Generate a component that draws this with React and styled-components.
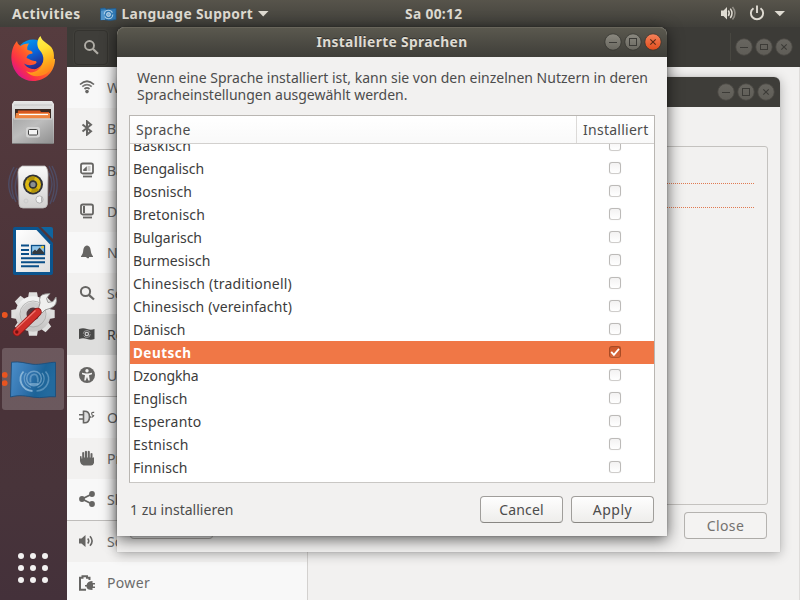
import React, { useLayoutEffect, useRef, useState } from "react";
import styled, { createGlobalStyle } from "styled-components";

const GlobalStyle = createGlobalStyle`
  *, *::before, *::after { box-sizing: border-box; }
  html, body { margin: 0; padding: 0; overflow: hidden; }
  body { font-family: "Noto Sans", "Open Sans", sans-serif; font-size: 14px; color: #3c3c3c; }
  svg { display: block; flex: none; }
`;

/* ---------- text that is tracked to fill a given width ---------- */

const TextSpan = styled.span`
  display: block;
  flex: none;
  width: ${(p) => p.$width}px;
  white-space: pre;
`;

function FitText({ width, children, className }) {
  const ref = useRef(null);
  const [spacing, setSpacing] = useState(0);
  useLayoutEffect(() => {
    const range = document.createRange();
    range.selectNodeContents(ref.current);
    const natural = range.getBoundingClientRect().width;
    setSpacing((width - natural) / String(children).length);
  }, []);
  return (
    <TextSpan ref={ref} $width={width} className={className} style={{ letterSpacing: spacing }}>
      {children}
    </TextSpan>
  );
}

/* ---------- desktop ---------- */

const Desktop = styled.div`
  position: relative;
  display: grid;
  grid-template-rows: 27px 573px;
  grid-template-columns: 67px 733px;
  width: 800px;
  height: 600px;
  overflow: hidden;
  background: #f2f1f0;
`;

const TopBar = styled.header`
  grid-column: 1 / 3;
  display: grid;
  grid-template-columns: 405px 1fr auto;
  align-items: center;
  background: linear-gradient(#57544b, #403f3a);
  color: #dfdbd2;
  font-weight: 700;
  font-size: 13.8px;
  line-height: 26px;
`;

const BarLeft = styled.div`
  display: flex;
  align-items: center;
  padding-left: 12px;
`;

const AppMenu = styled.div`
  display: flex;
  align-items: center;
  margin-left: 19px;
  gap: 5px;
`;

const BarRight = styled.div`
  display: flex;
  padding-right: 14px;
`;

const Dock = styled.nav`
  display: flex;
  flex-direction: column;
  gap: 2px;
  padding: 1px 3px 0 2px;
  background: linear-gradient(#563c3f, #4a3238 55%, #48343a 80%, #44313a);
`;

const DockItem = styled.div`
  width: 62px;
  height: 62px;
  border-radius: 3px;
  background: ${(p) => (p.$active ? "rgba(255,255,255,0.19)" : "transparent")};
`;

const AppsGrid = styled.div`
  display: grid;
  grid-template-columns: repeat(3, 6px);
  gap: 6px;
  margin: 141px 0 0 16px;
`;

const AppsDot = styled.i`
  width: 6px;
  height: 6px;
  border-radius: 50%;
  background: #f3f1f1;
`;

/* ---------- settings window ---------- */

const Settings = styled.section`
  display: grid;
  grid-template-rows: 40px 533px;
  background: #f2f1f0;
  border-right: 1px solid #dedcda;
`;

const SettingsHeader = styled.div`
  display: flex;
  align-items: center;
  justify-content: space-between;
  margin-right: -1px;
  padding: 0 8px 0 7px;
  background: #3c3b37;
`;

const SearchButton = styled.div`
  display: grid;
  place-items: center;
  width: 34px;
  height: 35px;
  border: 1px solid #34332f;
  border-radius: 4px;
  background: #3f3e3a;
  box-shadow: 0 0 0 1px #41403b;
`;

const HeaderControls = styled.div`
  display: flex;
  align-items: center;
  gap: 4px;
`;

const HeaderRule = styled.i`
  width: 1px;
  height: 28px;
  margin-right: 1px;
  background: #484741;
`;

const Sidebar = styled.div`
  width: 241px;
  height: 533px;
  overflow: hidden;
  border-right: 1px solid #d3d1cf;
  background: #f7f7f7;
`;

const Group = styled.div`
  border-bottom: 1px solid #bfbdbb;
`;

const SideRow = styled.div`
  display: flex;
  align-items: center;
  gap: 12px;
  height: 41px;
  padding-left: 12px;
  color: #6b6b6b;
  background: ${(p) => (p.$selected ? "#dededd" : p.$shade ? "#f2f1f0" : "#f8f8f8")};
  ${(p) => p.$selected && "color: #4a4a4a;"}

  svg { margin-top: -1px; }
`;

/* ---------- floating windows ---------- */

const Window = styled.section`
  position: absolute;
  left: 117px;
  display: flex;
  flex-direction: column;
  background: #f2f1f0;
  border-radius: 8px 8px 0 0;
`;

const BackWindow = styled(Window)`
  top: 77px;
  width: 663px;
  height: 475px;
  border-radius: 6px 6px 0 0;
  box-shadow: 0 2px 12px rgba(0, 0, 0, 0.3), 0 0 1px rgba(0, 0, 0, 0.3);
`;

const Dialog = styled(Window)`
  top: 27px;
  width: 550px;
  height: 509px;
  box-shadow: 0 3px 16px rgba(0, 0, 0, 0.65), 0 0 2px rgba(0, 0, 0, 0.3);
`;

const TitleBar = styled.div`
  display: grid;
  grid-template-columns: 1fr auto 1fr;
  align-items: center;
  height: 30px;
  flex: none;
  padding: 0 5px;
  border-radius: inherit;
  border-bottom-left-radius: 0;
  border-bottom-right-radius: 0;
  background: ${(p) => (p.$dim ? "#3e3d39" : "linear-gradient(#5b594f, #3f3e39)")};
  ${(p) => !p.$dim && "box-shadow: inset 0 1px 0 #69665b;"}
  color: #dfdbd2;
  font-weight: 700;
  font-size: 13.8px;
  text-shadow: 0 -1px 0 #32312e;
`;

const Title = styled.div`
  grid-column: 2;
  padding-bottom: 2px;
`;

const TitleControls = styled.div`
  grid-column: 3;
  justify-self: end;
  display: flex;
  gap: 2px;
`;

const BackBody = styled.div`
  flex: 1;
  display: flex;
  flex-direction: column;
  padding: 39px 12px 12px 13px;
`;

const TabFrame = styled.div`
  height: 359px;
  flex: none;
  border: 1px solid #c4c2bf;
  border-radius: 3px;
  padding: 36px 12px 0 13px;
`;

const DottedRule = styled.i`
  display: block;
  height: 1px;
  margin-bottom: 23px;
  background: repeating-linear-gradient(90deg, #f2f1f0 0 1px, #e07a52 1px 2px);
`;

const ButtonRow = styled.div`
  display: flex;
  justify-content: space-between;
  margin: 7px 1px 0 0;
`;

const Button = styled.div`
  display: grid;
  place-items: center;
  width: 83px;
  height: 27px;
  border: 1px solid ${(p) => (p.$dim ? "#b5b3b0" : "#a09e9b")};
  border-bottom-color: ${(p) => (p.$dim ? "#adaba8" : "#888683")};
  border-radius: 4px;
  background: ${(p) => (p.$dim ? "#f4f3f2" : "linear-gradient(#fefefe, #eeedeb)")};
  color: ${(p) => (p.$dim ? "#73716f" : "#4c4c4c")};
`;

const DialogBody = styled.div`
  display: flex;
  flex-direction: column;
  padding: 12px 12px 12px;
`;

const Intro = styled.div`
  padding: 0 0 0 8px;
  margin-bottom: 12px;
  height: 34px;
  line-height: 17px;
  color: #4c4c4c;
`;

const Table = styled.div`
  width: 526px;
  height: 368px;
  overflow: hidden;
  border: 1px solid #b9b6b2;
  border-bottom-color: #c9c7c4;
  background: #fff;
`;

const TableHead = styled.div`
  position: relative;
  z-index: 1;
  display: grid;
  grid-template-columns: 446px 1fr;
  height: 28px;
  border-bottom: 1px solid #d2d0ce;
  background: linear-gradient(#fff, #f9f9f9);
  color: #4c4c4c;
  line-height: 27px;
`;

const HeadCell = styled.div`
  padding-left: 6px;
  ${(p) => p.$ruled && "border-left: 1px solid #dcdad8;"}
`;

const Rows = styled.div`
  margin-top: -10px;
`;

const Row = styled.div`
  display: flex;
  justify-content: space-between;
  height: 23px;
  padding: 0 33px 0 3px;
  line-height: 23px;
  color: ${(p) => (p.$selected ? "#fff" : "#3c3c3c")};
  ${(p) => p.$selected && "background: #f07746; font-weight: 700; font-size: 13.5px; line-height: 25px;"}
`;

const CheckBox = styled.div`
  width: 12px;
  height: 12px;
  margin-top: 5px;
  border: 1px solid ${(p) => (p.$checked ? "#a84b25" : "#bcbab8")};
  border-bottom-color: ${(p) => (p.$checked ? "#b5552f" : "#cfcdcb")};
  border-radius: 3px;
  background: ${(p) => (p.$checked ? "linear-gradient(#cc5527, #d9693f)" : "linear-gradient(#f3f2f2, #fff)")};
  box-shadow: ${(p) => (p.$checked ? "none" : "0 0 1px rgba(0,0,0,0.15)")};
`;

const Footer = styled.div`
  display: flex;
  gap: 8px;
  margin-top: 13px;
  padding-right: 1px;
  color: #4c4c4c;
`;

const Status = styled.div`
  flex: 1;
  padding-left: 1px;
  line-height: 28px;
`;

/* ---------- icons ---------- */

function WinButton({ kind, tone = "dim", wide }) {
  const id = `wb-${tone}`;
  const fills = {
    dim: ["#686660", "#5f5d57"],
    normal: ["#8b8980", "#69675f"],
    close: ["#f6835b", "#e04c1c"],
  }[tone];
  const stroke = tone === "close" ? "#5a2a16" : "#3c3b37";
  return (
    <svg width={wide ? 16 : 18} height="18" viewBox={wide ? "1 0 16 18" : "0 0 18 18"} overflow="visible">
      <defs>
        <linearGradient id={id} x1="0" y1="0" x2="0" y2="1">
          <stop offset="0" stopColor={fills[0]} />
          <stop offset="1" stopColor={fills[1]} />
        </linearGradient>
      </defs>
      <circle cx="9" cy="9" r="8.2" fill={`url(#${id})`} stroke={tone === "dim" ? "#4c4a45" : "#34332f"} strokeWidth="0.8" />
      {kind === "min" && <path d="M5 9.5h8" stroke={stroke} />}
      {kind === "max" && <rect x="5.5" y={wide ? 6.5 : 5.5} width="7" height={wide ? 5 : 7} fill="none" stroke={stroke} />}
      {kind === "close" && <path d="M6.3 6.3l5.4 5.4M11.7 6.3l-5.4 5.4" stroke={stroke} strokeWidth="1.1" />}
    </svg>
  );
}

const G = "#666563";

const sideIcons = {
  wifi: (
    <g fill="none" stroke={G} strokeWidth="1.7">
      <path d="M1 5.5Q8 -1 15 5.5" />
      <path d="M3.3 7.7Q8 3.4 12.7 7.7" opacity=".85" />
      <path d="M5.5 10Q8 7.7 10.5 10" />
      <circle cx="8" cy="12.6" r="1.8" fill={G} stroke="none" />
    </g>
  ),
  bluetooth: <path d="M3.5 4.5L12 11.2L8 14.6V1.4L12 4.8L3.5 11.5" fill="none" stroke={G} strokeWidth="2" />,
  background: (
    <g>
      <rect x="2" y="1.5" width="12" height="10" rx="1.8" fill="none" stroke={G} strokeWidth="1.8" />
      <path d="M4.2 9V7.500L7.800 4.200V9z" fill={G} />
      <path d="M8.500 4h3v5h-3z" fill="#c9c8c7" />
      <path d="M4 14.5h9" stroke={G} strokeWidth="1.8" />
    </g>
  ),
  dock: (
    <g>
      <rect x="2" y="1.5" width="12" height="10" rx="1.8" fill="none" stroke={G} strokeWidth="1.8" />
      <path d="M4 3h2v7H4z" fill={G} />
      <path d="M4 14.5h9" stroke={G} strokeWidth="1.8" />
    </g>
  ),
  bell: <path d="M8 1.5C5 1.8 4.5 4.5 4.2 7C4 9.5 3 10.8 2 12.2V13H7.2Q8 15 10 14V13h4v-.8c-1-1.4-2-2.7-2.2-5.2C11.5 4.500 11 1.800 8 1.500z" fill={G} />,
  search: (
    <g fill="none" stroke={G}>
      <circle cx="6.500" cy="6.500" r="4.600" strokeWidth="2" />
      <path d="M9.800 9.800L15 14.500" strokeWidth="2.300" />
    </g>
  ),
  region: (
    <g>
      <path d="M0 3Q4 1.500 8 3T15.500 3V13Q12 14.500 8 13T0 13z" fill="#494948" />
      <circle cx="7.800" cy="8" r="3.500" fill="none" stroke="#aaa" strokeWidth=".8" strokeDasharray="9 2" />
      <circle cx="7.800" cy="8" r="1.700" fill="none" stroke="#ccc" strokeWidth="1.200" />
    </g>
  ),
  access: (
    <g>
      <circle cx="8" cy="8" r="8" fill={G} />
      <circle cx="8" cy="3.700" r="1.700" fill="#f2f1f0" />
      <path d="M3 5.700L6.700 6.500h2.600L13 5.700v1.600L10 8.200L10.800 13.500H9.300L8 10L6.700 13.500H5.200L6 8.200L3 7.300z" fill="#f2f1f0" />
    </g>
  ),
  online: (
    <g fill="none" stroke={G}>
      <path d="M4.500 2.300Q10.500 1.500 10.500 8T4.500 13.700z" strokeWidth="1.600" fill="#ddd" />
      <path d="M0 5.700h4M0 10h4M10.500 8h1.500" strokeWidth="1.600" />
      <path d="M15.200 3.400Q12.500 3 12.700 4.800T14.300 6.500T12.500 8.500" strokeWidth="1.200" />
    </g>
  ),
  privacy: <path d="M1 6.500Q1.500 5.500 2.600 6.500V8.500H3.200V2.500Q4.200 1.500 5.200 2.500V7.500H5.900V1.500Q7 .2 8 1.500V7.500H8.700V1.500Q9.800 .2 10.800 1.500V7.500H11.500V3.500Q12.500 2.500 13.500 3.500V8Q15 6.500 15 8V13Q14 15.500 12 15.500H4.500Q1.500 14.500 1 11z" fill={G} />,
  sharing: (
    <g fill={G}>
      <path d="M13 3L3 8l10 5" fill="none" stroke={G} strokeWidth="1.800" />
      <circle cx="3" cy="8" r="2.900" />
      <circle cx="13" cy="3" r="2.900" />
      <circle cx="13" cy="13" r="2.900" />
    </g>
  ),
  sound: (
    <g>
      <path d="M0 5.500h2.500L6.500 2v12L2.500 10.500H0z" fill={G} />
      <path d="M8.700 5.500Q10.800 8 8.700 10.500M11 3.200Q15.200 8 11 12.800" fill="none" stroke={G} strokeWidth="1.600" />
    </g>
  ),
  power: (
    <g>
      <path d="M7 14.700H1V2.700H3.500V1.300H8V2.700h2.500V5" fill="none" stroke={G} strokeWidth="2" />
      <path d="M13.500 6V8h2.500v1.500h-2v2h2V13h-2.500v2Q7.500 15 7.500 11.500H6V10H7.500Q8.500 6 13.500 6z" fill={G} />
    </g>
  ),
};

function SideIcon({ name }) {
  return (
    <svg width="16" height="16" viewBox="0 0 16 16">
      {sideIcons[name]}
    </svg>
  );
}

function FirefoxIcon() {
  return (
    <svg width="62" height="62" viewBox="2 28 62 62">
      <defs>
        <linearGradient id="ff-body" x1=".9" y1=".1" x2=".1" y2=".8">
          <stop offset="0" stopColor="#ffd23a" />
          <stop offset=".25" stopColor="#ffa01f" />
          <stop offset=".55" stopColor="#ff5a2a" />
          <stop offset=".8" stopColor="#fa2e4a" />
          <stop offset="1" stopColor="#dd1688" />
        </linearGradient>
        <linearGradient id="ff-globe" x1="0" y1="0" x2=".5" y2="1">
          <stop offset="0" stopColor="#00a8f5" />
          <stop offset=".5" stopColor="#0867dd" />
          <stop offset="1" stopColor="#2b1c78" />
        </linearGradient>
        <linearGradient id="ff-tail" x1="0" y1="0" x2=".3" y2="1">
          <stop offset="0" stopColor="#fff85a" />
          <stop offset=".45" stopColor="#ffe134" />
          <stop offset=".75" stopColor="#ffb31c" />
          <stop offset="1" stopColor="#ff8a1c" />
        </linearGradient>
      </defs>
      <circle cx="33" cy="56" r="16.500" fill="url(#ff-globe)" />
      <path d="M17 41C12.500 46 11 53 11.500 60C13 73 22 81 33 81C46 81 55 71 55 59L44 57C44 62 41 67 36 69C34 69.500 27 69 24 63.500C28 66 31 65 34 64.500C37 63.500 37.500 61 34.500 61C31 60.500 29.500 59 26.500 58C27 55 29 54 32.500 53.500C33 51.500 31 50.500 27.500 50C26.500 47 28 45 29 43.500C25 43.500 22.500 44.500 20.500 46C18 44.500 17.500 43 17 41z" fill="url(#ff-body)" />
      <path d="M40.500 36C36.500 40 36.500 46 39.500 50C45 56 45 64 38 70C34 73 29 73 26 71C32 79 45 77 50 70C54.500 63 55.500 53 51.500 47.500C48 43 42 42 40.500 36z" fill="url(#ff-tail)" />
    </svg>
  );
}

function FilesIcon() {
  return (
    <svg width="62" height="62" viewBox="2 92 62 62">
      <defs>
        <linearGradient id="fi-front" x1="0" y1="0" x2="1" y2="1">
          <stop offset="0" stopColor="#a8a8a8" />
          <stop offset=".4" stopColor="#bdbdbd" />
          <stop offset="1" stopColor="#8e8e8e" />
        </linearGradient>
        <linearGradient id="fi-top" x1="0" y1="0" x2="0" y2="1">
          <stop offset="0" stopColor="#e6e6e6" />
          <stop offset="1" stopColor="#a8a8a8" />
        </linearGradient>
      </defs>
      <path d="M14 101H52L54 104V143H12V104z" fill="url(#fi-top)" />
      <path d="M14 105H52" stroke="#c6c6c6" />
      <rect x="15" y="109" width="36" height="11" fill="#3b2a23" />
      <path d="M18 110.500H40L41 112H49V119H17z" fill="#d75822" />
      <path d="M16 113H50V119H15z" fill="#ee8440" />
      <path d="M19 114.500H48" stroke="#fff" strokeWidth="1.200" />
      <path d="M13 118.500H53L53.500 144H12.500z" fill="url(#fi-front)" />
      <path d="M14 119H52" stroke="#d8d8d8" />
      <path d="M12.500 143.500H53.500" stroke="#7c7c7c" />
      <rect x="26" y="127" width="14" height="10.500" rx="2.500" fill="#d4d4d4" />
      <rect x="28.500" y="129.500" width="9" height="5.500" rx="1" fill="#f4f4f4" stroke="#444" />
    </svg>
  );
}

function SpeakerIcon() {
  return (
    <svg width="62" height="62" viewBox="2 156 62 62">
      <defs>
        <linearGradient id="sp-case" x1="0" y1="0" x2="0" y2="1">
          <stop offset="0" stopColor="#fafafa" />
          <stop offset="1" stopColor="#d2d1d0" />
        </linearGradient>
      </defs>
      <g fill="none" stroke="#4d618d" strokeWidth="1.400" opacity=".5">
        <path d="M17 168Q7 184 16 202M14 167Q4 184 13 199M19 172Q12 186 18 200" />
        <path d="M49 166Q59 184 50 204M52 166Q62 184 53 202M49 173Q55 184 49 196" />
      </g>
      <path d="M22 166H45Q48 168 48 175L47.500 204Q47 208 43 208H23Q19 208 19 204L18 172Q18 168 22 166z" fill="url(#sp-case)" stroke="#b9b8b7" strokeWidth=".8" />
      <circle cx="33" cy="184.500" r="10" fill="#303236" />
      <circle cx="33" cy="184.500" r="8" fill="#dcb812" />
      <path d="M33 184.500L27 179A8 8 0 0 1 35 176.700zM33 184.500L39 190A8 8 0 0 1 31 192.300z" fill="#b39408" />
      <circle cx="33" cy="184.500" r="4.300" fill="#343536" />
      <circle cx="33" cy="184.500" r="2.600" fill="#8b8f91" />
      <circle cx="39.500" cy="199.500" r="3.600" fill="#f3f3f3" stroke="#aaa" strokeWidth=".8" />
      <path d="M41 196.500A3.600 3.600 0 0 1 41 202.500z" fill="#b4b4b4" />
      <circle cx="26" cy="201" r="2" fill="none" stroke="#ccc" />
    </svg>
  );
}

function WriterIcon() {
  return (
    <svg width="62" height="62" viewBox="2 220 62 62">
      <defs>
        <linearGradient id="wr-page" x1="0" y1="0" x2="1" y2="1">
          <stop offset="0" stopColor="#fff" />
          <stop offset="1" stopColor="#dedede" />
        </linearGradient>
      </defs>
      <path d="M15 227H38L53 243V273Q53 275 51 275H15Q13 275 13 273V229Q13 227 15 227z" fill="#0b558f" />
      <path d="M41 227H51Q53 227 53 229V239z" fill="#0f659f" />
      <path d="M16 230H36.500L50 244.500V272H16z" fill="url(#wr-page)" />
      <path d="M21 245.500h8M21 250h8M21 254h8M21 258.200h24M21 262.200h24M21 266.200h18" stroke="#0b4f88" strokeWidth="1.900" />
      <rect x="31.500" y="245.500" width="13" height="9" fill="#8fc4e8" stroke="#0b4f88" strokeWidth="1.300" />
      <path d="M32.300 254V252L35 249.500L36.500 251L39.500 247.500L44 252.500V254z" fill="#343b40" />
      <circle cx="42.600" cy="247.200" r="1.400" fill="#f0c732" />
    </svg>
  );
}

function SettingsIcon() {
  const teeth = [0, 45, 90, 135, 180, 225, 270, 315];
  return (
    <svg width="62" height="62" viewBox="2 284 62 62">
      <defs>
        <linearGradient id="se-gear" x1="0" y1="0" x2="0" y2="1">
          <stop offset="0" stopColor="#f1f1f1" />
          <stop offset="1" stopColor="#c6c5c4" />
        </linearGradient>
      </defs>
      <circle cx="4.700" cy="315" r="3" fill="#e95420" />
      <g fill="#dfdfde">
        {teeth.map((a) => (
          <path key={a} transform={`rotate(${a} 33 314)`} d="M28 298L29 292.300H37L38 298z" />
        ))}
      </g>
      <circle cx="33" cy="314" r="13.400" fill="none" stroke="url(#se-gear)" strokeWidth="8.500" />
      <circle cx="33" cy="314" r="12" fill="#cecdcd" />
      <circle cx="33" cy="314" r="13" fill="none" stroke="#aaa9a8" strokeWidth=".8" />
      <circle cx="33" cy="314" r="6.500" fill="#51383e" />
      <path d="M38 310L40 303Q38 295 45 294L50 293.500L46.500 298.500L48 302.500L53 301.500L56 297Q58 305 51 308L45 310L42 313z" fill="#efefee" stroke="#91908f" strokeWidth=".9" />
      <path d="M17 332L37.500 312" stroke="#8d1818" strokeWidth="8.500" strokeLinecap="round" />
      <path d="M17 332L37.500 312" stroke="#cf2f2b" strokeWidth="6.800" strokeLinecap="round" />
      <path d="M16.500 328.500L35.500 310.500" stroke="#ee7770" strokeWidth="1.300" />
      <circle cx="16.800" cy="332" r="1.700" fill="#6f1313" />
    </svg>
  );
}

function FlagIcon() {
  return (
    <svg width="62" height="62" viewBox="2 348 62 62">
      <defs>
        <linearGradient id="fl-cloth" x1="0" y1="0" x2="1" y2=".3">
          <stop offset="0" stopColor="#4b8fca" />
          <stop offset=".45" stopColor="#3475b0" />
          <stop offset=".75" stopColor="#1c6397" />
          <stop offset="1" stopColor="#226a9e" />
        </linearGradient>
      </defs>
      <circle cx="4.700" cy="374.900" r="2.900" fill="#e95420" />
      <circle cx="4.700" cy="383.100" r="2.900" fill="#e95420" />
      <path d="M11.500 362.200C20 361 26 363.500 33 364.300S50 362 55.500 362.300V396.800C48 396 42 398.500 34 397.300S20 394.500 10.500 397z" fill="url(#fl-cloth)" stroke="#1c4e7c" strokeWidth=".9" />
      <g fill="none" stroke="#9cc3e0">
        <path d="M23.500 371.500A12.500 11.800 0 0 0 32.500 391" strokeWidth="1.800" opacity=".8" />
        <path d="M45.500 371.500A12.500 11.800 0 0 1 36.500 391" strokeWidth="1.600" opacity=".45" />
        <path d="M26.300 373A9.800 9.300 0 0 0 31 387.500M42 373A9.800 9.300 0 0 1 37.500 387.500" strokeWidth="1.200" opacity=".5" />
        <circle cx="34" cy="378.500" r="7.300" strokeWidth="1.500" opacity=".55" />
        <path d="M30.500 382.500Q29.500 374.500 34 374.300T37.800 382.500" strokeWidth="1.800" opacity=".45" />
        <path d="M29.500 384h9" strokeWidth="1.800" opacity=".6" />
      </g>
    </svg>
  );
}

function FolderIcon() {
  return (
    <svg width="17" height="16" viewBox="0 0 17 16">
      <path d="M.5 2.500L5 2L6 3.200L16 2.500V13.500Q11 14.800 7 14T.5 14z" fill="#2f78b3" stroke="#1e5c90" strokeWidth=".8" />
      <path d="M1 5l4-1V14H1z" fill="#5195cb" />
      <circle cx="8.500" cy="8.500" r="4.300" fill="none" stroke="#a9cbe4" strokeWidth="1.100" strokeDasharray="11 2.500" />
      <circle cx="8.500" cy="8.500" r="2" fill="#85b2d4" stroke="#d0e2ef" strokeWidth=".8" />
    </svg>
  );
}

function StatusIcons() {
  return (
    <svg width="66" height="20" viewBox="720 4 66 20">
      <path d="M721 10.500h2.500L727 7v12.500L723.500 16H721z" fill="#dfdbd2" />
      <g fill="none" stroke="#dfdbd2" strokeWidth="1.500">
        <path d="M728.300 10.500Q730.200 13.200 728.300 16" />
        <path d="M730.300 8.600Q733.800 13.200 730.300 18" />
        <path d="M732.500 7Q737.500 13.200 732.500 19.500" opacity=".45" />
      </g>
      <g fill="none" stroke="#dfdbd2" strokeWidth="1.900">
        <path d="M753.500 8.200A6.100 6.100 0 1 0 760.500 8.200" />
        <path d="M757 5.500V13" />
      </g>
      <path d="M774.500 11H785L779.800 16.300z" fill="#dfdbd2" />
    </svg>
  );
}

/* ---------- data ---------- */

const sideGroups = [
  [["wifi", "Wi-Fi"], ["bluetooth", "Bluetooth", 1]],
  [
    ["background", "Background"],
    ["dock", "Dock", 1],
    ["bell", "Notifications"],
    ["search", "Search", 1],
    ["region", "Region & Language", 0, 1],
    ["access", "Universal Access", 1],
  ],
  [["online", "Online Accounts"], ["privacy", "Privacy", 1], ["sharing", "Sharing"]],
  [["sound", "Sound", 1], ["power", "Power", 0, 0, 43]],
];

const languages = [
  ["Baskisch", 58],
  ["Bengalisch", 71],
  ["Bosnisch", 59],
  ["Bretonisch", 72],
  ["Bulgarisch", 69],
  ["Burmesisch", 77.5],
  ["Chinesisch (traditionell)", 159],
  ["Chinesisch (vereinfacht)", 159],
  ["Dänisch", 52.5],
  ["Deutsch", 58.5, true],
  ["Dzongkha", 65.5],
  ["Englisch", 54.5],
  ["Esperanto", 68.5],
  ["Estnisch", 55.5],
  ["Finnisch", 54.5],
];

export default function App() {
  return (
    <>
      <GlobalStyle />
      <Desktop>
        <TopBar>
          <BarLeft>
            <FitText width={68.5}>Activities</FitText>
            <AppMenu>
              <FolderIcon />
              <FitText width={131.5}>Language Support</FitText>
              <svg width="11" height="6" viewBox="0 0 11 6">
                <path d="M0 0H10.500L5.200 5.500z" fill="#dfdbd2" />
              </svg>
            </AppMenu>
          </BarLeft>
          <FitText width={57.5}>Sa 00:12</FitText>
          <BarRight>
            <StatusIcons />
          </BarRight>
        </TopBar>

        <Dock>
          <DockItem><FirefoxIcon /></DockItem>
          <DockItem><FilesIcon /></DockItem>
          <DockItem><SpeakerIcon /></DockItem>
          <DockItem><WriterIcon /></DockItem>
          <DockItem><SettingsIcon /></DockItem>
          <DockItem $active><FlagIcon /></DockItem>
          <AppsGrid>
            {Array.from({ length: 9 }, (_, i) => <AppsDot key={i} />)}
          </AppsGrid>
        </Dock>

        <Settings>
          <SettingsHeader>
            <SearchButton>
              <svg width="16" height="16" viewBox="0 0 16 16">
                <circle cx="6.500" cy="6.500" r="4.500" fill="none" stroke="#b0ada6" strokeWidth="1.900" />
                <path d="M9.800 9.800L15 14.700" stroke="#b0ada6" strokeWidth="2.200" />
              </svg>
            </SearchButton>
            <HeaderControls>
              <HeaderRule />
              <WinButton kind="min" wide />
              <WinButton kind="max" wide />
              <WinButton kind="close" wide />
            </HeaderControls>
          </SettingsHeader>
          <Sidebar>
            {sideGroups.map((group, g) => (
              <Group key={g}>
                {group.map(([icon, label, shade, selected, width]) => (
                  <SideRow key={label} $shade={shade} $selected={selected}>
                    <SideIcon name={icon} />
                    {width ? <FitText width={width}>{label}</FitText> : label}
                  </SideRow>
                ))}
              </Group>
            ))}
          </Sidebar>
        </Settings>

        <BackWindow>
          <TitleBar $dim>
            <TitleControls>
              <WinButton kind="min" />
              <WinButton kind="max" />
              <WinButton kind="close" />
            </TitleControls>
          </TitleBar>
          <BackBody>
            <TabFrame>
              <DottedRule />
              <DottedRule />
            </TabFrame>
            <ButtonRow>
              <Button $dim />
              <Button $dim><FitText width={37.5}>Close</FitText></Button>
            </ButtonRow>
          </BackBody>
        </BackWindow>

        <Dialog>
          <TitleBar>
            <Title><FitText width={151}>Installierte Sprachen</FitText></Title>
            <TitleControls>
              <WinButton kind="min" tone="normal" />
              <WinButton kind="max" tone="normal" />
              <WinButton kind="close" tone="close" />
            </TitleControls>
          </TitleBar>
          <DialogBody>
            <Intro>
              <FitText width={511}>Wenn eine Sprache installiert ist, kann sie von den einzelnen Nutzern in deren</FitText>
              <FitText width={270.5}>Spracheinstellungen ausgewählt werden.</FitText>
            </Intro>
            <Table>
              <TableHead>
                <HeadCell><FitText width={54.5}>Sprache</FitText></HeadCell>
                <HeadCell $ruled><FitText width={65.5}>Installiert</FitText></HeadCell>
              </TableHead>
              <Rows>
                {languages.map(([name, width, selected]) => (
                  <Row key={name} $selected={selected}>
                    <FitText width={width}>{name}</FitText>
                    <CheckBox $checked={selected}>
                      {selected && (
                        <svg width="10" height="10" viewBox="0 0 10 10">
                          <path d="M1.200 4.800L3.900 7.800L9 1.800" fill="none" stroke="#fff" strokeWidth="1.800" />
                        </svg>
                      )}
                    </CheckBox>
                  </Row>
                ))}
              </Rows>
            </Table>
            <Footer>
              <Status><FitText width={103.500}>1 zu installieren</FitText></Status>
              <Button><FitText width={44.500}>Cancel</FitText></Button>
              <Button><FitText width={39.500}>Apply</FitText></Button>
            </Footer>
          </DialogBody>
        </Dialog>
      </Desktop>
    </>
  );
}
